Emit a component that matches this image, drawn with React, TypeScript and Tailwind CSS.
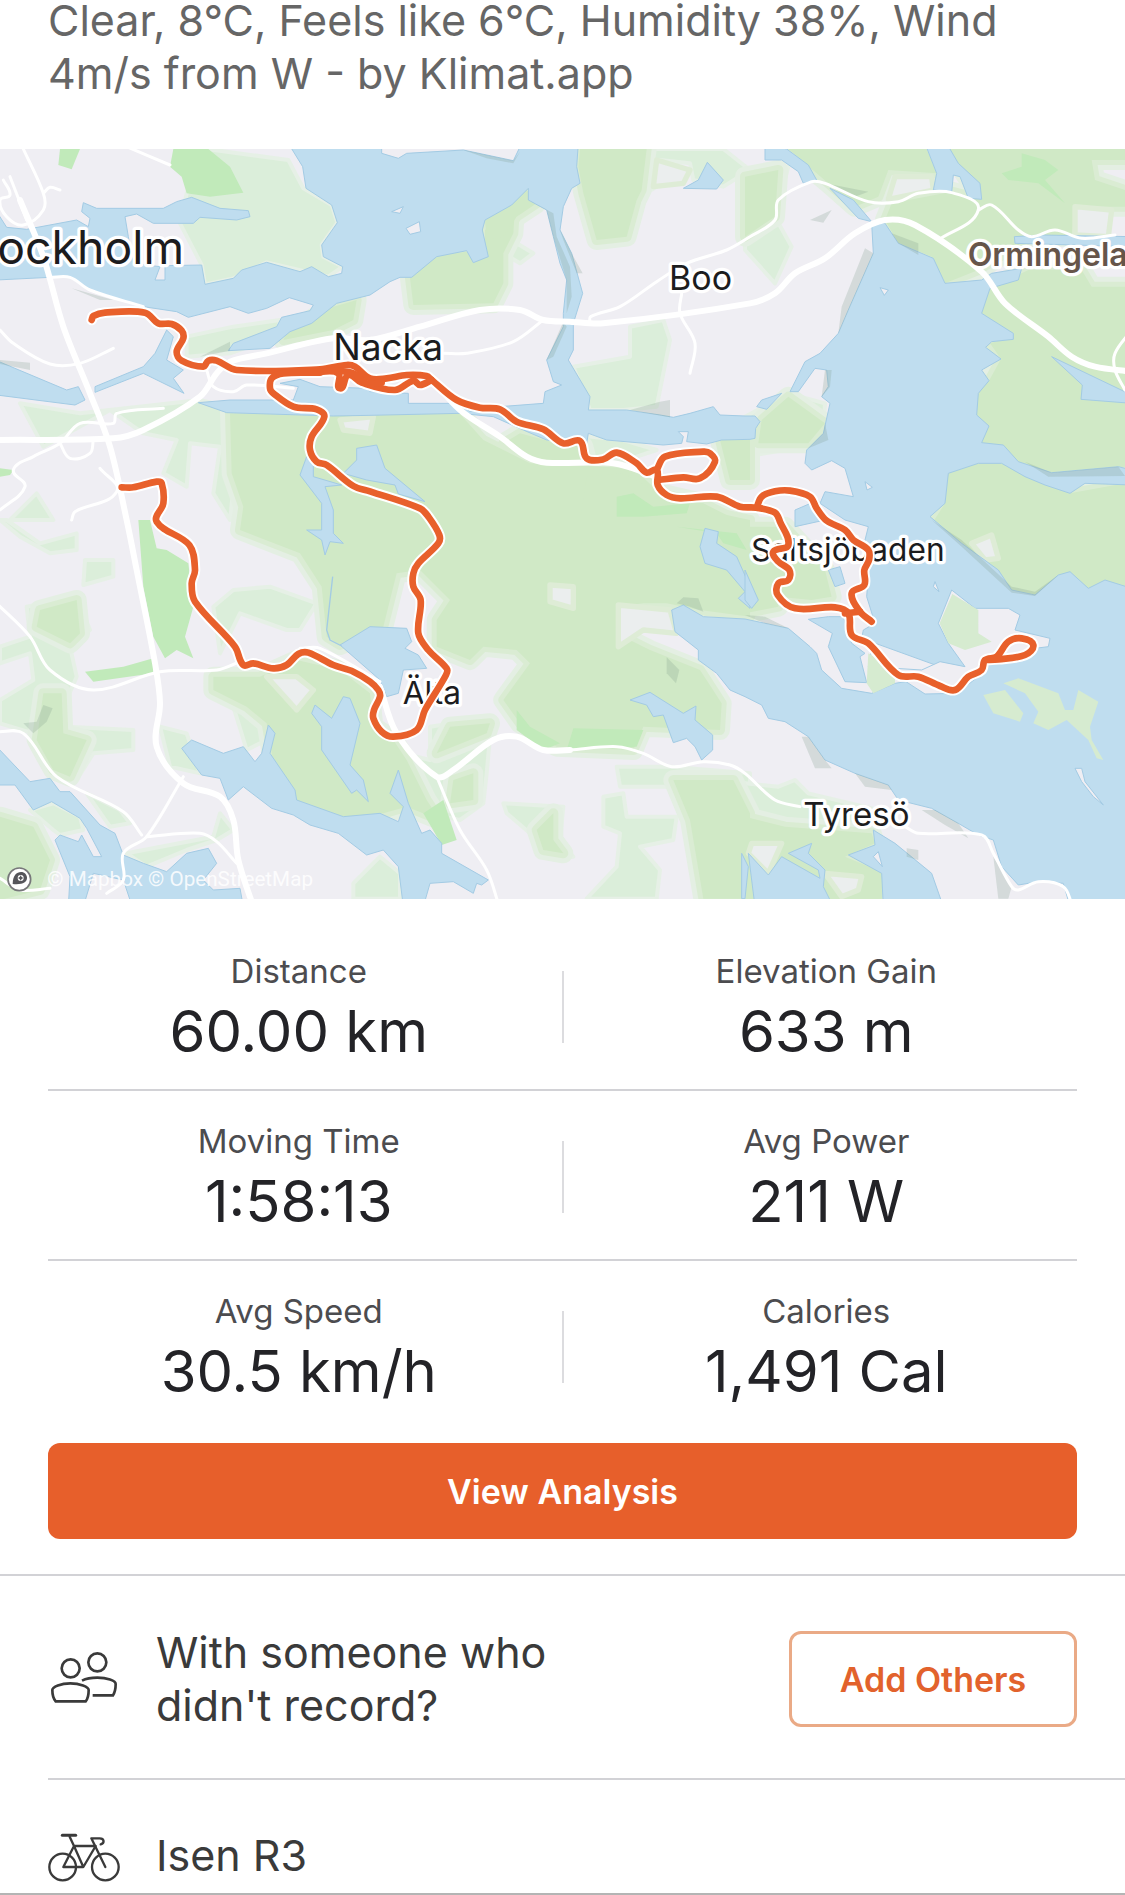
type Stat = { label: string; value: string };
type Place = { name: string; x: number; y: number; size: number; tone?: "brown" };

const STATS: [Stat, Stat][] = [
  [{ label: "Distance", value: "60.00 km" }, { label: "Elevation Gain", value: "633 m" }],
  [{ label: "Moving Time", value: "1:58:13" }, { label: "Avg Power", value: "211 W" }],
  [{ label: "Avg Speed", value: "30.5 km/h" }, { label: "Calories", value: "1,491 Cal" }],
];

// The map is stored as six sectors, each with its own origin
const NW = [0, 0];
const N = [1110, 0];
const NE = [2235, 0];
const SW = [0, 1140];
const S = [1110, 1140];
const SE = [2235, 1140];

function at(origin: number[], points: string) {
  return points
    .split(" ")
    .map((p) => {
      const [x, y] = p.split(",").map(Number);
      return `${x + origin[0]},${y + origin[1]}`;
    })
    .join(" ") + " ";
}

// Catmull-Rom spline through the points, as cubic segments
function smooth(points: string) {
  const pts = points.trim().split(" ").map((p) => p.split(",").map(Number));
  let d = `M${pts[0][0]} ${pts[0][1]}`;
  for (let i = 0; i < pts.length - 1; i++) {
    const a = pts[i - 1] ?? pts[i];
    const b = pts[i];
    const c = pts[i + 1];
    const e = pts[i + 2] ?? c;
    // handles never reach past a third of their own segment
    const len = Math.hypot(c[0] - b[0], c[1] - b[1]) / 3;
    const h1 = Math.hypot(c[0] - a[0], c[1] - a[1]) || 1;
    const h2 = Math.hypot(e[0] - b[0], e[1] - b[1]) || 1;
    const x1 = b[0] + ((c[0] - a[0]) / h1) * len;
    const y1 = b[1] + ((c[1] - a[1]) / h1) * len;
    const x2 = c[0] - ((e[0] - b[0]) / h2) * len;
    const y2 = c[1] - ((e[1] - b[1]) / h2) * len;
    d += `C${x1.toFixed(1)} ${y1.toFixed(1)} ${x2.toFixed(1)} ${y2.toFixed(1)} ${c[0]} ${c[1]}`;
  }
  return d;
}

const LIGHT_GREEN = [
  at(NW, "620,27 865,60 910,145 995,195 1012,248 965,315 970,350 1028,380 985,410 800,367 700,415 615,433 605,375 540,250 560,160"),
  at(NW, "60,790 240,820 600,780 680,800 720,860 690,1140 640,1060 660,920 570,910 560,1040 490,1000 530,900 430,880 330,810 130,920"),
  at(NW, "560,590 700,560 840,540 830,590 690,640 560,650"),
  at(NW, "30,1140 110,1060 160,1140"),
  at(N, "780,560 880,540 900,600 860,800 760,810 660,810 610,680 780,650"),
  at(N, "830,27 1060,27 1140,90 1060,140 970,120 960,70 870,60 860,140 780,190"),
  at(N, "400,340 440,310 490,340 450,370"),
  at(N, "400,910 470,870 760,900 860,930 800,950 650,960 500,960"),
  at(N, "520,990 650,1000 860,1020 900,1080 1100,1100 1140,1160 1130,1260 700,1200"),
  at(NE, "0,90 130,80 90,230 140,320 90,430 0,330"),
  at(NE, "0,830 130,760 240,790 235,880 180,920 0,950"),
  at(NE, "1060,620 1110,500 1140,480 1140,680 1070,650"),
  at(SW, "0,0 20,0 120,70 230,40 230,90 150,100 60,50"),
  at(SW, "255,120 340,120 340,170 250,195"),
  at(SW, "80,260 230,230 270,330 210,380 230,470 200,540 200,620 400,630 400,690 280,700 230,780 160,760 100,640 0,610 0,540 100,480 90,400 0,430 0,380 90,350"),
  at(SW, "480,620 560,640 600,760 510,740"),
  at(SW, "640,260 700,210 810,200 950,250 900,330 860,330 720,280 660,400"),
  at(SW, "620,470 800,440 800,660 740,690 700,560 620,520"),
  at(SW, "90,870 160,850 240,890 250,930 180,945 160,930"),
  at(SW, "260,820 360,870 390,910 330,920"),
  at(SW, "380,1000 440,1040 560,990 650,960 700,930 660,880 640,950"),
  at(SW, "1060,1090 1140,1010 1200,1060 1200,1136 1060,1136"),
  at(S, "180,620 370,590 360,650 350,760 340,850 270,900 170,880 100,700 180,720"),
  at(S, "400,850 580,860 570,960 610,1010 520,1010 480,940 410,880"),
  at(S, "700,830 760,820 770,890 920,890 910,960 810,980 870,1050 860,1136 650,1136 740,1040 750,940 700,920"),
  at(S, "740,740 900,740 1140,760 1140,860 920,800 750,800"),
  at(SE, "0,790 100,800 150,780 190,820 400,870 385,930 0,900"),
];

const GREEN = [
  "690,820 1380,822 1450,900 1590,970 1900,985 1980,1060 2110,1110 2250,1140 2250,1430 2100,1410 2000,1390 1930,1390 1850,1400 1870,1490 1950,1530 2100,1590 2165,1690 2160,1770 1930,1760 1900,1830 1670,1820 1560,1750 1510,1680 1590,1570 1550,1530 1450,1520 1410,1560 1310,1520 1310,1440 1350,1380 1260,1290 1190,1300 1150,1460 1020,1515 980,1490 965,1340 900,1240 720,1170 730,1100 695,1000",
  at(NW, "860,580 1000,500 1070,480 1060,540 1000,570 850,600"),
  at(N, "120,415 205,345 290,335 310,365 345,350 345,270 435,200 430,280 400,340 400,430 370,490 130,495"),
  at(N, "345,240 470,150 500,190 440,230 400,290 350,300"),
  at(N, "630,27 830,27 815,150 800,180 770,290 680,300 640,160 625,80"),
  at(N, "450,880 560,910 640,920 650,960 500,960 400,910"),
  at(N, "1050,900 1140,900 1140,1020 1080,1020"),
  at(N, "630,1140 650,1010 760,1000 870,1060 1000,1090 1100,1140"),
  at(NE, "0,110 100,90 90,230 0,290"),
  at(NE, "130,27 545,27 575,100 430,90 400,170 330,200 250,130 215,100"),
  at(NE, "610,27 1140,27 1140,60 1040,60 1050,120 1140,150 1140,200 990,200 980,290 860,290 700,390 600,430 560,350 460,310 420,240 440,190 620,155 710,178"),
  at(NE, "850,390 1010,390 1040,440 1140,440 1140,980 920,998 820,965 710,908 732,858 695,825 700,760 732,722 768,657 735,610 805,590 710,520 735,445"),
  at(NE, "610,1000 700,970 770,970 900,1035 975,1060 1140,1030 1140,1160 555,1160 600,1090"),
  at(NE, "50,840 130,770 240,850 190,910 40,910"),
  at(SW, "120,270 230,240 240,340 210,370 110,320"),
  at(SW, "130,520 185,520 190,640 260,660 210,770 160,750 110,660"),
  at(SW, "0,890 100,920 150,1020 120,1110 0,1140"),
  at(SW, "890,420 1020,450 1110,520 1120,620 1180,660 1220,720 1280,840 1320,900 1220,860 1150,880 1030,890 890,840 820,730 800,610 740,560 640,510 640,470 780,470"),
  at(S, "240,620 360,610 350,640 200,700"),
  at(S, "250,780 310,760 310,840 240,850"),
  at(S, "500,930 550,880 550,960 580,1000 520,990"),
  at(S, "910,780 1090,780 1140,880 1140,1136 1000,1136 960,900"),
  at(SE, "560,0 1140,0 1140,200 1080,180 1030,205 975,155 870,225 800,210 650,70"),
  at(SE, "0,20 120,20 240,150 260,230 200,240 100,230 100,260 0,280"),
  at(SE, "0,890 120,920 380,940 390,970 300,1010 420,1060 410,1140 0,1140"),
];

const PARKS = [
  at(NW, "520,27 625,27 690,80 730,158 630,170 560,160 545,110 510,80"),
  at(NW, "180,27 240,27 215,88 175,75"),
  at(NW, "0,985 40,990 30,1005 0,1010"),
  at(SW, "415,0 450,0 470,85 500,90 565,130 580,260 555,350 580,415 530,390 495,415 460,350 430,200"),
  at(SW, "255,455 370,440 460,415 460,460 280,485"),
  at(N, "740,1070 790,1060 850,1100 960,1090 950,1120 820,1130 740,1130"),
  at(NE, "770,100 830,80 830,40 900,60 940,90 900,120 960,190 880,130 790,120"),
  at(S, "610,625 820,630 800,680 590,690"),
  at(S, "440,570 480,620 570,670 520,690 440,630"),
  at(S, "160,880 220,840 260,960 215,975"),
  at(S, "920,20 1010,30 1100,40 1130,90 1060,70 1040,40"),
];

// Built-up clearings inside the forests
const CLEARINGS = [
  at(N, "860,60 960,90 940,130 850,140"),
  at(NE, "450,110 560,110 565,150 430,178"),
  at(NE, "990,200 1100,210 1090,290 990,285"),
  at(NW, "1020,840 1120,830 1110,880 1030,870"),
  at(SW, "800,470 890,470 940,510 890,570"),
  at(S, "540,195 610,200 610,265 540,245"),
  at(S, "745,255 900,270 920,340 820,330 745,380"),
  at(SE, "20,970 110,970 70,1060 10,1000"),
  at(SE, "240,1060 350,1070 340,1110 290,1130"),
  at(SE, "680,70 740,45 760,115 720,120"),
];

const WATER = [
  at(NW, "865,10 908,80 918,145 995,195 1012,248 965,315 970,350 1028,380 1025,400 985,410 935,380 900,395 800,367 725,390 700,415 615,433 605,375 495,377 495,420 465,420 480,380 400,370 385,290 375,230 410,222 460,250 580,250 600,232 710,240 750,230 745,212 660,205 575,172 530,185 490,205 290,205 250,188 245,215 270,235 265,260 230,240 80,268 20,262 -10,215 -10,420 150,412 210,412 270,450 430,500 530,515 565,532 690,500 745,520 800,505 868,473 940,495 930,512 845,532 830,560 700,610 685,632 810,625 870,575 935,550 1010,490") +
    at(N, "0,465 60,425 90,412 125,412 200,350 290,332 310,368 355,350 337,270 345,240 425,195 475,145 475,180 530,210 550,290 570,370 590,420 580,520 580,560 530,660 550,725 575,735 525,755 520,790 390,800 300,815 270,790 115,790 115,760 0,755") +
    at(NW, "1100,745 960,740 900,718 840,730 895,740 880,780 690,780 595,788 680,818 1000,828") +
    at(N, "0,826 270,820 370,830 460,870 530,900 650,910 655,880 710,900 880,915 935,910 940,890 925,875 955,875 950,905 1010,912 1055,900 1140,898") +
    at(NE, "30,895 32,865 45,845 30,828 0,828") +
    at(N, "1050,825 1030,800 960,820 910,832 870,825 770,810 655,810 660,770 595,660 610,630 610,550 638,460 605,340 570,270 580,200 605,145 630,130 620,80 625,10 455,10 430,62 280,30 110,40 85,55 35,40 35,10"),
  at(NE, "380,250 420,250 460,310 565,355 600,430 710,420 740,400 830,385 820,420 735,445 710,520 805,580 805,598 740,605 722,622 768,657 710,690 732,722 700,760 695,825 732,858 710,908 775,915 820,965 920,998 1120,980 1160,990 1160,1035 1020,1030 975,1060 900,1035 840,1010 770,970 700,970 610,1000 600,1090 555,1130") +
    at(SE, "650,70 760,150 800,210 870,225 940,165 975,155 1030,205 1080,180 1160,205 1160,1160 975,1160 955,1090 880,1085 820,1095 770,1040 745,960 700,945 640,910 560,865 460,840 430,795 330,760 240,720 190,650 120,605 70,595 50,555 0,530") +
    at(S, "1080,510 1040,460 985,420 985,390 915,335 905,270 940,255 1000,290 1125,297") +
    at(SE, "130,325 195,380 215,400 230,450 290,505 380,520 450,490 640,460 350,355 355,330 390,310 365,230 375,100 360,60 370,20") +
    at(NE, "300,1140 225,1090 240,1055 325,1070 300,985 260,962 200,990 180,970 185,930 235,880 255,790 230,770 250,740 245,690 210,685 160,755 135,755 180,665 225,640 280,580 310,510 385,340"),
  at(NE, "60,10 125,27 190,75 215,120 175,130 160,95 110,60 60,60"),
  at(NE, "255,145 325,180 380,245 340,235"),
  at(NE, "540,10 575,100 565,150 620,158 625,105 645,110 670,175 710,178 705,130 640,70 605,10"),
  at(NE, "808,290 890,285 1160,290 1160,320 810,310"),
  at(NE, "920,650 1160,765 1160,790 1008,778 1012,735"),
  at(NE, "35,800 50,780 110,760 65,808"),
  at(NE, "150,1110 220,1080 240,1140 150,1160"),
  at(N, "940,145 985,120 1012,67 1060,120 1040,147"),
  at(NW, "-10,662 200,750 235,740 255,780 225,795 -10,765"),
  at(NW, "285,740 430,680 465,640 500,570 520,590 500,660 550,690 520,715 552,760 430,700 285,757"),
  at(NW, "920,950 940,960 940,1010 1025,1035 975,1040 1000,1110 1000,1180 1030,1210 990,1205 975,1245 965,1200 920,1170 965,1170 965,1090 900,1005"),
  "1030,1000 1070,960 1070,925 1130,915 1155,985 1275,1085 1195,1062 1185,1035 1100,1020",
  at(SW, "1020,375 1110,320 1220,325 1235,365 1215,385 1255,405 1280,445 1210,450 1195,520 1160,530 1140,480"),
  at(SW, "545,685 575,660 670,700 730,680 765,725 785,700 805,615 825,640 810,700 885,810 890,840 1030,890 1140,880 1195,905 1210,860 1170,820 1195,750 1225,850 1265,940 1290,930 1325,970 1325,1000 1465,1080 1445,1095 1430,1090 1420,1120 1360,1085 1290,1090 1270,1160 1210,1160 1195,1040 1150,990 1100,1005 1015,940 930,915 880,885 815,865 730,800 685,840 660,775 605,765"),
  at(SW, "-10,680 90,785 150,775 180,815 210,815 300,915 345,940 370,1005 430,1030 500,1055 560,1000 625,985 650,1030 610,1080 640,1110 720,1105 730,1160 440,1160 390,1140 370,1080 280,1060 250,1160 205,1160 210,1070 165,960 180,945 235,965 245,945 280,1010 305,1010 260,925 240,895 155,845 100,870 45,795 -10,795"),
  at(SW, "935,580 945,555 995,595 1030,530 1050,535 1080,610 1050,735 1090,780 1105,845 1070,810 1055,820 965,690 965,620"),
  at(S, "1005,25 1045,35 1040,70 1100,110 1140,200 1140,265 1105,235 1125,215 1070,150 1005,130 990,80"),
  at(S, "780,540 840,517 940,580 978,558 975,600 1028,645 1028,690 995,720 975,680 950,655 910,668 880,585 850,590 830,555"),
  at(SE, "190,298 250,290 295,290 320,370 360,400 345,410 365,488 300,485 250,380 262,340"),
  at(SE, "250,150 285,140 300,190 270,200"),
  at(SE, "0,150 40,240 20,265 0,240"),
  at(SE, "130,1000 200,970 190,1000 240,1050 235,1100 265,1160 30,1160 10,1000 70,1065 110,1010 225,1075 220,1050"),
  at(SE, "310,1005 390,975 385,930 450,970 560,1060 595,1160 415,1160 410,1060"),
  at(SE, "-10,1000 10,1040 0,1136 -10,1136"),
];

const ISLANDS = [
  at(SE, "620,210 690,265 790,265 825,285 810,330 915,355 910,380 870,385 830,415 760,420 720,440 700,470 635,520 540,522 460,470 370,440 380,390 450,445 530,450 585,425 660,440 610,370 580,310"),
  at(N, "65,215 100,200 90,220"),
  at(N, "108,265 148,245 152,275 120,283"),
  at(NE, "405,443 430,450 418,466"),
  at(NE, "360,1025 382,1042 366,1050"),
  at(SE, "570,185 582,215 565,200"),
  at(SE, "990,745 1010,745 1020,785 1075,855 1045,830 1010,785"),
  at(SE, "385,1010 400,995 412,1040"),
];

const GREEN_ISLANDS = [
  at(SE, "622,222 700,270 700,340 740,365 660,390 610,370 584,310"),
  at(SE, "370,400 450,450 450,490 385,520 365,490"),
  at(SE, "715,525 780,510 835,580 825,605 745,580"),
  at(SE, "775,490 820,475 940,520 960,570 985,570 1000,510 1060,545 1035,620 1040,660 1075,720 1055,715 1030,660 965,600 910,630 865,610 880,575 840,520"),
];

// Hill shading along the shores
const SHADE = [
  at(N, "280,30 430,62 450,35 430,70 350,55"),
  at(N, "475,180 530,210 550,290 590,420 590,520 605,470 600,380 560,290 550,220"),
  at(N, "570,270 605,340 638,400 620,400 580,300"),
  at(N, "580,545 530,660 550,650 590,560"),
  at(N, "870,785 900,780 900,832 780,810"),
  at(NE, "385,340 310,510 280,580 290,500 360,325"),
  at(NE, "195,240 260,210 235,248"),
  at(NE, "440,280 520,310 520,345 460,310"),
  at(NE, "840,965 920,998 1120,980 1140,1008 910,1010"),
  at(NE, "240,690 260,690 255,740 230,770"),
  at(NE, "240,850 250,900 190,925 235,880"),
  at(NE, "240,130 370,155 330,170"),
  at(NW, "215,445 340,480 300,480"),
  at(NW, "0,660 90,668 90,690 0,672"),
  at(NW, "600,650 690,605 690,632"),
  at(SW, "130,555 158,565 140,605 100,640 70,610 110,605"),
  at(S, "920,250 940,232 985,235 1000,275 960,260"),
  at(S, "890,412 928,450 918,490 890,460"),
  at(SE, "170,650 190,650 240,720 260,745 210,745"),
  at(SE, "330,760 430,795 440,810 360,800"),
  at(SE, "530,870 570,870 640,910 670,955 600,915"),
  at(SE, "485,985 520,990 520,1020 485,1010"),
  at(SE, "745,1010 800,1100 790,1136 760,1136"),
  at(SE, "560,0 650,60 800,200 870,215 940,165 870,228 800,218 650,80"),
  at(SE, "0,285 60,290 130,325 60,310"),
];

const MAJOR_ROADS = [
  "60,180 130,350 190,560 270,760 330,920 380,1140 410,1290 465,1570 480,1690 470,1820 550,1930 660,1970 700,2040 715,2160 760,2300",
  at(NW, "-10,900 340,895 430,870 600,770 650,700 690,665 800,640 1000,595") +
    at(N, "0,600 150,560 330,510 450,510 520,540 600,545 700,550 1140,490") +
    at(NE, "90,460 150,400 240,355 330,280 420,240 510,255 710,395 780,490 910,590 980,650 1050,680 1160,695"),
  at(N, "180,710 270,810 390,890 470,950 530,968 730,970 860,1010"),
  at(S, "30,500 80,640 200,770 250,750 370,660 440,650 520,690 600,690"),
];

const MINOR_ROADS = [
  at(NW, "0,570 40,610 150,672 240,670 340,625"),
  at(NW, "150,412 210,412 270,450 430,500"),
  at(NW, "0,1110 75,1040 40,990 100,950 180,910 240,850 340,850 350,820 490,805"),
  at(NW, "180,910 210,955 270,940 280,900"),
  at(NW, "70,27 130,160 130,210 70,255 20,230 0,180 30,165 10,120"),
  at(NW, "130,160 150,142 180,150"),
  at(NW, "380,20 510,75"),
  at(NW, "620,690 640,740 700,755 740,735 880,745"),
  at(NW, "215,1140 225,1115 350,1055 300,985"),
  at(NW, "30,110 80,240"),
  at(N, "220,640 290,640 430,605 520,540"),
  at(N, "660,550 662,530 750,500 860,425 950,370 1070,330 1140,290 1215,240 1225,180 1325,125 1365,130 1495,185 1585,185 1645,160 1745,158 1825,210 1705,300"),
  at(NE, "700,210 740,195 820,270 860,290 930,270 1010,295 1110,285"),
  at(N, "935,460 930,520 975,610 960,700"),
  at(NE, "1160,570 1110,640 1110,690 1140,750"),
  at(SW, "-10,250 90,350 150,450 280,510 480,455 650,450 720,425"),
  at(SW, "-10,635 70,640 170,770 370,875 425,945"),
  at(SW, "550,770 440,950 370,1000 370,1080 320,1120"),
  at(SW, "440,950 600,940 650,965 710,1030"),
  at(SW, "0,1075 60,1110 150,1105"),
  at(SW, "900,385 960,385 1140,485"),
  at(S, "200,770 270,930 350,1050 385,1150"),
  at(S, "600,690 740,680 820,700 905,740 1000,725 1080,735 1125,760 1215,840 1290,860"),
  at(SE, "480,920 520,940 710,945 745,1000 800,1100 820,1110 880,1085 955,1100 980,1150"),
];

const ROUTE = [
  at(NW, "275,540 280,528 315,518 435,518 475,550 515,552 545,572 550,595 530,635 545,662 610,680 625,662 650,662 710,690 960,688 1040,675 1065,680 1110,715") +
    at(N, "50,715 110,705 170,708 185,720 260,780 330,803 390,808 440,845 520,868 580,910 630,903 650,955 700,958 740,938 800,970 830,998 860,990 863,1035 890,1065 930,1075 1040,1070 1110,1100") +
    at(NE, "35,1103 90,1118 105,1145") +
    at(SE, "130,75 85,95 100,125 133,150 130,180 100,190 98,225 150,265 270,262 310,280 320,345 370,370 460,465 520,470 585,498 630,510 670,470 710,450 720,420 755,410 790,365 830,355 865,375 840,405 760,418 720,420"),
  at(N, "860,990 885,950 1000,935 1020,940 1035,965 990,1015 940,1012 865,1020"),
  at(NE, "35,1103 50,1070 90,1054 135,1052 195,1070 215,1105 245,1142") +
    at(SE, "300,30 325,60 370,90 372,120 358,150 358,195 320,220 345,275 380,305"),
  at(SE, "300,280 345,275"),
  at(NW, "850,695 960,695 1015,700 1020,745 1045,705 1085,728") +
    at(N, "75,750 130,722 150,735 185,720"),
  at(NW, "990,690 1060,700 1100,730 1145,728"),
  at(NW, "960,698 850,700 815,715 810,745 820,760 880,800 950,808 973,830 935,890 930,930 950,965 980,975 1060,1038 1110,1054") +
    at(N, "150,1105 175,1130") +
    at(S, "208,45 205,70 145,130 130,160 130,200 152,240 145,340 175,390 230,445 228,465 165,570 140,630 70,650 35,635 10,595 12,570 30,530 25,510 0,485") +
    at(SW, "1060,455 1000,435 925,398 895,402 860,435 820,445 760,430 730,435 705,380 585,245 575,190 585,150 568,75 470,5 490,-50 485,-110 470,-115 400,-98 365,-98"),
].map(smooth);

const PLACES: Place[] = [
  { name: "ockholm", x: -8, y: 372, size: 139 },
  { name: "Nacka", x: 1000, y: 660, size: 110 },
  { name: "Boo", x: 2007, y: 449, size: 102 },
  { name: "Ormingela", x: 2903, y: 378, size: 96, tone: "brown" },
  { name: "Saltsjöbaden", x: 2253, y: 1262, size: 95 },
  { name: "Tyresö", x: 2410, y: 2057, size: 99 },
  { name: "Älta", x: 1208, y: 1693, size: 95 },
];

export default function App() {
  return (
    <div className="w-full overflow-hidden bg-white font-['Inter','Liberation_Sans',sans-serif]">
      <p className="-mt-1.5 px-12 pb-[49px] text-[43px] leading-[53px] text-[#666666]">
        Clear, 8°C, Feels like 6°C, Humidity 38%, Wind 4m/s from W - by Klimat.app
      </p>

      <RouteMap />

      <section className="px-12 pt-5">
        {STATS.map(([left, right], i) => (
          <div
            key={left.label}
            className={`grid grid-cols-[1fr_2px_1fr] gap-x-3 border-t-2 ${i > 0 ? "border-[#d2d2d6]" : "border-transparent"}`}
          >
            <StatCell stat={left} />
            <div className="mt-[50px] h-18 bg-[#dcdcdf]" />
            <StatCell stat={right} />
          </div>
        ))}
        <button className="mt-3.5 mb-[35px] h-24 w-full rounded-xl bg-[#e75f2b] text-[34px] font-semibold text-white">
          View Analysis
        </button>
      </section>

      <section className="flex items-center border-t-2 border-[#d2d2d6] px-12 pt-[50px] pb-[46px]">
        <PeopleIcon />
        <p className="ml-9 w-[420px] text-[43px] leading-[53px] text-[#3a3a3a]">With someone who didn't record?</p>
        <button className="ml-auto h-24 w-72 rounded-xl border-3 border-[#eaaa86] text-[34px] font-semibold text-[#e2622c]">
          Add Others
        </button>
      </section>

      <section className="border-b-2 border-[#b4b4b4] pl-12">
        <div className="flex items-center border-t-2 border-[#d2d2d6] pt-12 pb-[11px]">
          <BikeIcon />
          <p className="ml-9 text-[43px] leading-[53px] text-[#3a3a3a]">Isen R3</p>
        </div>
      </section>
    </div>
  );
}

function StatCell({ stat }: { stat: Stat }) {
  return (
    <div className="pt-[30px] pb-[22px] text-center">
      <div className="text-[33px] leading-[40px] text-[#4c4c4f]">{stat.label}</div>
      <div className="mt-1 text-[58px] leading-[72px] text-[#232327]">{stat.value}</div>
    </div>
  );
}

function RouteMap() {
  return (
    <svg viewBox="0 27 3375 2250" className="block aspect-[3/2] w-full" role="img" aria-label="Route map">
      <rect y="27" width="3375" height="2250" fill="#efeef3" />
      <g fill="#dbeeda" stroke="#e6f0e6" strokeWidth="12" strokeLinejoin="round">
        {LIGHT_GREEN.map((p) => <polygon key={p} points={p} />)}
      </g>
      <g fill="none" strokeLinejoin="round">
        {GREEN.map((p) => <polygon key={p} points={p} stroke="#e4efe3" strokeWidth="60" />)}
        {GREEN.map((p) => <polygon key={p} points={p} stroke="#daecd3" strokeWidth="30" />)}
      </g>
      <g fill="#d0e9c6">
        {GREEN.map((p) => <polygon key={p} points={p} />)}
      </g>
      <g fill="#c1eaba">
        {PARKS.map((p) => <polygon key={p} points={p} />)}
      </g>
      <g fill="#ebeeee" stroke="#deecd6" strokeWidth="16" strokeLinejoin="round">
        {CLEARINGS.map((p) => <polygon key={p} points={p} />)}
      </g>
      <g fill="#bfddef" stroke="#a3cbe4" strokeWidth="3" strokeLinejoin="round">
        {WATER.map((p) => <polygon key={p} points={p} />)}
      </g>
      <polyline points={at(SW, "998,170 980,330 990,360 1025,378")} fill="none" stroke="#a3cbe4" strokeWidth="4" />
      <g fill="#efeef3" stroke="#a3cbe4" strokeWidth="3" strokeLinejoin="round">
        {ISLANDS.map((p) => <polygon key={p} points={p} />)}
      </g>
      <g fill="#d6ebd0">
        {GREEN_ISLANDS.map((p) => <polygon key={p} points={p} />)}
      </g>
      <g fill="#7f9a8c" fillOpacity="0.24">
        {SHADE.map((p) => <polygon key={p} points={p} />)}
      </g>

      <g fill="none" stroke="#ffffff" strokeLinejoin="round" strokeLinecap="round">
        {MINOR_ROADS.map((p) => <path key={p} d={smooth(p)} strokeWidth="9" />)}
        {MAJOR_ROADS.map((p) => <path key={p} d={smooth(p)} strokeWidth="18" />)}
      </g>

      <g stroke="#ffffff" strokeWidth="20" strokeLinejoin="round" paintOrder="stroke">
        {PLACES.map((p) => (
          <text
            key={p.name}
            x={p.x}
            y={p.y}
            fontSize={p.size}
            fill={p.tone === "brown" ? "#66554a" : "#1c1c1e"}
            fontWeight={p.tone === "brown" ? 600 : 400}
          >
            {p.name}
          </text>
        ))}
      </g>

      <g fill="none" strokeLinejoin="round" strokeLinecap="round">
        {ROUTE.map((d) => <path key={d} d={d} stroke="#ffffff" strokeWidth="32" />)}
        {ROUTE.map((d) => <path key={d} d={d} stroke="#e8602b" strokeWidth="20" />)}
      </g>

      <circle cx="58" cy="2218" r="34" fill="#ffffff" stroke="#77777a" strokeWidth="5" />
      <path d="M38 2232c0-26 12-36 25-36 11 0 18 8 18 18 0 13-14 21-43 18z" fill="#55555a" />
      <circle cx="62" cy="2214" r="9" fill="#ffffff" />
      <path d="M62 2206l3 5 5 3-5 3-3 5-3-5-5-3 5-3z" fill="#55555a" />
      <text x="142" y="2237" fontSize="62" fill="#ffffff" fillOpacity="0.85" className="font-['Roboto','Liberation_Sans',sans-serif]">
        © Mapbox © OpenStreetMap
      </text>
    </svg>
  );
}

function PeopleIcon() {
  return (
    <svg viewBox="54 39 216 216" className="size-18 shrink-0" fill="none" stroke="#3a3a3a" strokeWidth="8" aria-hidden="true">
      <circle cx="122" cy="115" r="27" />
      <circle cx="202" cy="97" r="27" />
      <path d="M77 214h90c6-7 9-20 9-34 0-10-27-20-55-20s-54 10-54 20c0 14 4 27 10 34z" />
      <path d="M156 152c14-7 30-9 46-9 28 0 55 8 55 19 0 14-3 26-8 34h-61" />
    </svg>
  );
}

function BikeIcon() {
  return (
    <svg viewBox="54 54 216 162" className="h-[54px] w-18 shrink-0" fill="none" stroke="#3a3a3a" strokeWidth="7" aria-hidden="true">
      <circle cx="98" cy="171" r="40" />
      <circle cx="226" cy="171" r="40" />
      <path d="M97 76h40" strokeWidth="9" strokeLinecap="round" />
      <path d="M118 78l14 30 28 63 37-63h-65l-32 63h60" strokeLinejoin="round" />
      <path d="M226 171l-42-86h25c14 0 16 14 3 18" strokeLinecap="round" strokeLinejoin="round" />
    </svg>
  );
}
